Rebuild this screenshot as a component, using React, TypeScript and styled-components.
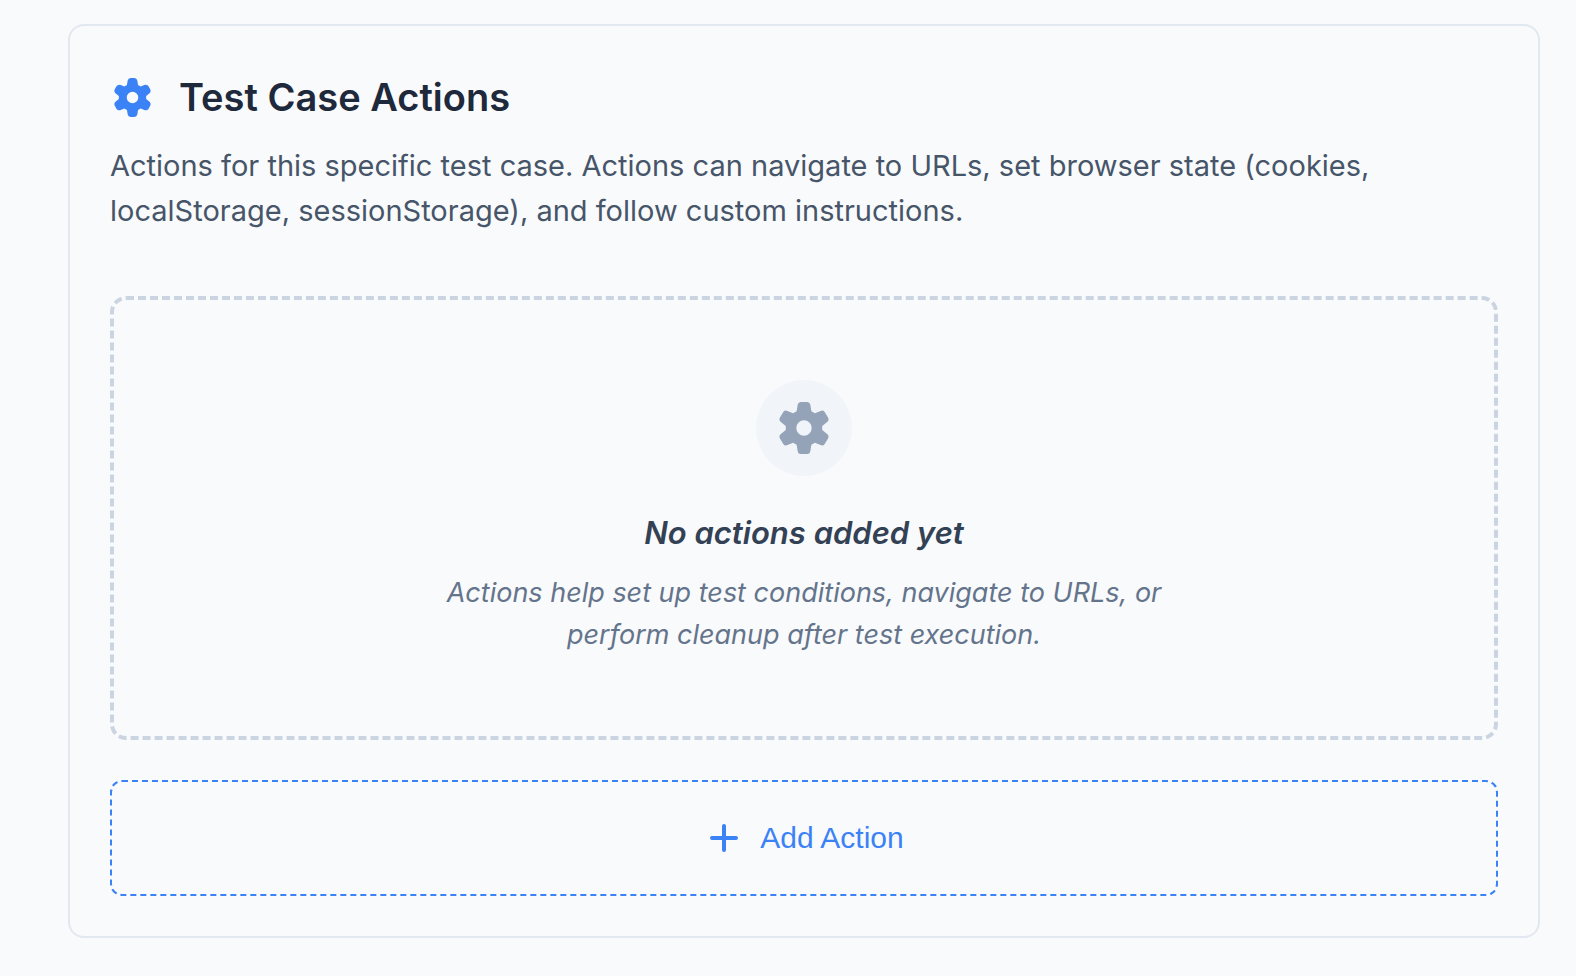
import React from "react";
import styled, { createGlobalStyle } from "styled-components";

const GlobalStyle = createGlobalStyle`
  * { box-sizing: border-box; }
  body {
    margin: 0;
    background: #f9fafc;
    font-family: Inter, "Liberation Sans", sans-serif;
  }
`;

const Page = styled.main`
  padding: 24px 36px 38px 68px;
`;

const Card = styled.section`
  border: 2px solid #e2e8f0;
  border-radius: 16px;
  padding: 40px;
`;

const Heading = styled.h2`
  display: flex;
  align-items: center;
  gap: 24px;
  margin: 0;
  padding-top: 4px;
  font-size: 38px;
  line-height: 54px;
  font-weight: 600;
  color: #1e293b;
`;

const Description = styled.p`
  margin: 19px 0 0;
  font-size: 29px;
  line-height: 45px;
  color: #475569;
`;

const EmptyState = styled.div`
  display: flex;
  flex-direction: column;
  align-items: center;
  margin-top: 63px;
  padding: 80px 40px;
  border: 4px dashed #cbd5e1;
  border-radius: 16px;
  text-align: center;
  font-style: italic;
`;

const IconBadge = styled.div`
  display: flex;
  align-items: center;
  justify-content: center;
  width: 96px;
  height: 96px;
  border-radius: 50%;
  background: #f1f5f9;
`;

const EmptyTitle = styled.h3`
  margin: 32px 0 0;
  font-size: 31px;
  line-height: 50px;
  font-weight: 600;
  color: #334155;
`;

const EmptyText = styled.p`
  max-width: 740px;
  margin: 14px 0 0;
  font-size: 27px;
  line-height: 42px;
  color: #64748b;
`;

const AddButton = styled.button`
  display: flex;
  align-items: center;
  justify-content: center;
  gap: 16px;
  width: 100%;
  margin-top: 40px;
  padding: 34px 24px;
  border: 2px dashed #3b82f6;
  border-radius: 12px;
  background: transparent;
  color: #3b82f6;
  font: 400 30px/44px "Liberation Sans", Arial, sans-serif;
  cursor: pointer;
`;

const GearIcon = styled.svg<{ $size: number }>`
  flex: none;
  width: ${(p) => p.$size}px;
  height: ${(p) => p.$size}px;
`;

// Outline of a six-toothed gear centred on the origin, followed by its hub.
function gearPath(corner: number) {
  const turn = (x: number, y: number, step: number) => {
    const a = (step * Math.PI) / 3;
    const px = x * Math.cos(a) - y * Math.sin(a);
    const py = x * Math.sin(a) + y * Math.cos(a);
    return `${px.toFixed(2)} ${py.toFixed(2)}`;
  };
  const side = 5.8 + corner * 0.18;
  let d = "";
  for (let i = 0; i < 6; i += 1) {
    d += `${i ? "Q" + turn(-9.05, -15.7, i) + " " : "M"}${turn(-7.4, -16.8, i)}`;
    d += `L${turn(-side, -26 + corner, i)}Q${turn(-5.8, -26, i)} ${turn(-5.8 + corner, -26, i)}`;
    d += `L${turn(5.8 - corner, -26, i)}Q${turn(5.8, -26, i)} ${turn(side, -26 + corner, i)}`;
    d += `L${turn(7.4, -16.8, i)}`;
  }
  return `${d}ZM-7.7 0a7.7 7.7 0 1 0 15.4 0a7.7 7.7 0 1 0-15.4 0Z`;
}

const Gear = ({ size, color, corner }: { size: number; color: string; corner: number }) => (
  <GearIcon $size={size} viewBox="-30 -30 60 60" fill={color} fillRule="evenodd" aria-hidden="true">
    <path d={gearPath(corner)} />
  </GearIcon>
);

export default function App() {
  return (
    <>
      <GlobalStyle />
      <Page>
        <Card>
          <Heading>
            <Gear size={45} color="#3b82f6" corner={4} />
            Test Case Actions
          </Heading>
          <Description>
            Actions for this specific test case. Actions can navigate to URLs, set browser state
            (cookies, localStorage, sessionStorage), and follow custom instructions.
          </Description>
          <EmptyState>
            <IconBadge>
              <Gear size={60} color="#94a3b8" corner={2.5} />
            </IconBadge>
            <EmptyTitle>No actions added yet</EmptyTitle>
            <EmptyText>
              Actions help set up test conditions, navigate to URLs, or perform cleanup after test
              execution.
            </EmptyText>
          </EmptyState>
          <AddButton type="button">
            <svg width="40" height="40" viewBox="0 0 40 40" stroke="currentColor" strokeWidth="4" strokeLinecap="round" aria-hidden="true">
              <path d="M20 8v24M8 20h24" />
            </svg>
            Add Action
          </AddButton>
        </Card>
      </Page>
    </>
  );
}
